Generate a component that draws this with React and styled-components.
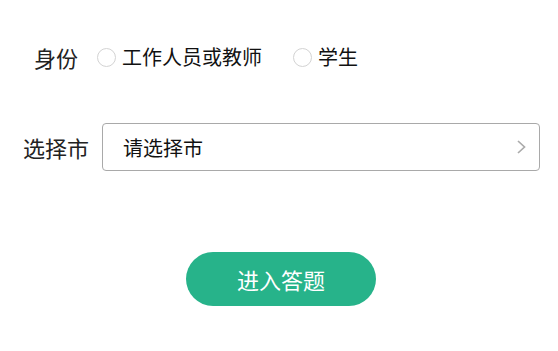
import React from "react";
import styled, { createGlobalStyle } from "styled-components";

const Global = createGlobalStyle`
  html, body { margin: 0; padding: 0; background: #fff; }
  body { font-family: "Noto Sans CJK SC", "Noto Sans", sans-serif; color: #222; }
`;

const Page = styled.div`
  width: 558px;
  padding-top: 37px;
  box-sizing: border-box;
  display: flex;
  flex-direction: column;
`;

const Row = styled.div`
  display: flex;
  align-items: center;
  height: ${(p) => p.$h}px;
  margin-top: ${(p) => p.$mt || 0}px;
  padding-left: 14px;
  padding-right: 18px;
`;

const Label = styled.div`
  width: 84px;
  flex: none;
  text-align: center;
  font-size: 22px;
  line-height: 1;
  color: #222;
`;

const Options = styled.div`
  display: flex;
  align-items: center;
  margin-left: -1px;
`;

const Option = styled.label`
  display: flex;
  align-items: center;
  margin-right: 31px;
  font-size: 20px;
  line-height: 1;
  color: #111;
`;

const Circle = styled.span`
  width: 19px;
  height: 19px;
  box-sizing: border-box;
  border-radius: 50%;
  border: 1.5px solid #d3d3d3;
  background: #fff;
  margin-right: 6px;
  flex: none;
`;

const Select = styled.div`
  flex: 1;
  margin-left: 4px;
  height: 48px;
  box-sizing: border-box;
  border: 1px solid #a9a9a9;
  border-radius: 4px;
  display: flex;
  align-items: center;
  justify-content: space-between;
  padding: 0 13px 0 20px;
  font-size: 20px;
  color: #111;
`;

const ButtonRow = styled.div`
  display: flex;
  justify-content: center;
  padding-left: 4px;
  margin-top: 81px;
`;

const Button = styled.button`
  width: 190px;
  height: 54px;
  border: none;
  border-radius: 27px;
  background: #27b38a;
  color: #fff;
  font-family: "Noto Sans CJK SC", "Noto Sans", sans-serif;
  font-size: 22px;
  padding: 0;
  cursor: pointer;
`;

const Chevron = () => (
  <svg width="10" height="16" viewBox="0 0 10 16">
    <polyline points="2,2 8.5,8 2,14" fill="none" stroke="#ababab" strokeWidth="1.7" />
  </svg>
);

export default function App() {
  return (
    <>
      <Global />
      <Page>
        <Row $h={40}>
          <Label>身份</Label>
          <Options>
            <Option>
              <Circle />
              工作人员或教师
            </Option>
            <Option>
              <Circle />
              学生
            </Option>
          </Options>
        </Row>
        <Row $h={48} $mt={46}>
          <Label>选择市</Label>
          <Select>
            <span>请选择市</span>
            <Chevron />
          </Select>
        </Row>
        <ButtonRow>
          <Button>进入答题</Button>
        </ButtonRow>
      </Page>
    </>
  );
}
